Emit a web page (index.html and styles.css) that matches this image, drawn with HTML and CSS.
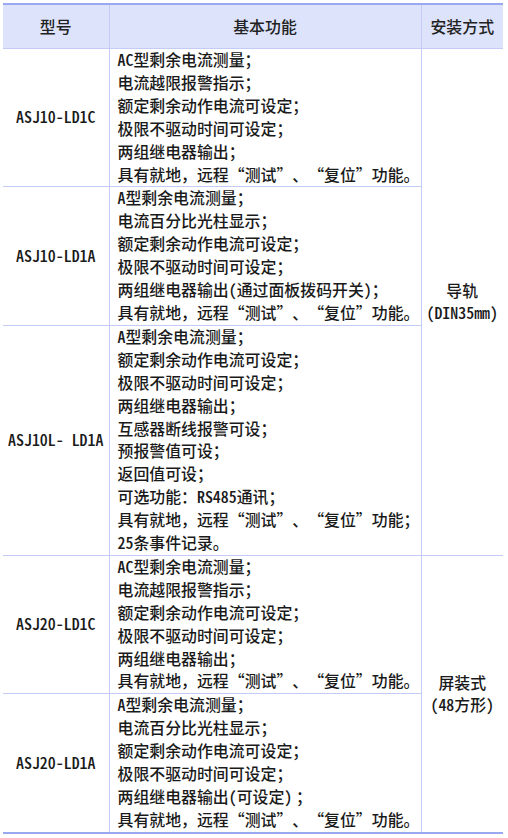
FILE: index.html
```html
<!DOCTYPE html>
<html lang="zh-CN">
<head>
<meta charset="utf-8">
<link rel="stylesheet" href="styles.css">
</head>
<body>
<div class="wrap">
<table class="spec">
  <colgroup>
    <col class="c1"><col class="c2"><col class="c3">
  </colgroup>
  <thead>
    <tr><th>型号</th><th>基本功能</th><th>安装方式</th></tr>
  </thead>
  <tbody>
    <tr>
      <td class="model">ASJ10-LD1C</td>
      <td class="func"><span class="en">AC</span>型剩余电流测量；<br>电流越限报警指示；<br>额定剩余动作电流可设定；<br>极限不驱动时间可设定；<br>两组继电器输出；<br>具有就地，远程<span class="qo">“</span>测试<span class="qc">”</span>、<span class="qo">“</span>复位<span class="qc">”</span>功能。</td>
      <td class="mount" rowspan="3">导轨<br><span class="en">(DIN35mm)</span></td>
    </tr>
    <tr>
      <td class="model">ASJ10-LD1A</td>
      <td class="func"><span class="en">A</span>型剩余电流测量；<br>电流百分比光柱显示；<br>额定剩余动作电流可设定；<br>极限不驱动时间可设定；<br>两组继电器输出<span class="en">(</span>通过面板拨码开关<span class="en">)</span>；<br>具有就地，远程<span class="qo">“</span>测试<span class="qc">”</span>、<span class="qo">“</span>复位<span class="qc">”</span>功能。</td>
    </tr>
    <tr>
      <td class="model">ASJ10L- LD1A</td>
      <td class="func"><span class="en">A</span>型剩余电流测量；<br>额定剩余动作电流可设定；<br>极限不驱动时间可设定；<br>两组继电器输出；<br>互感器断线报警可设；<br>预报警值可设；<br>返回值可设；<br>可选功能：<span class="en">RS485</span>通讯；<br>具有就地，远程<span class="qo">“</span>测试<span class="qc">”</span>、<span class="qo">“</span>复位<span class="qc">”</span>功能；<br><span class="en">25</span>条事件记录。</td>
    </tr>
    <tr>
      <td class="model">ASJ20-LD1C</td>
      <td class="func"><span class="en">AC</span>型剩余电流测量；<br>电流越限报警指示；<br>额定剩余动作电流可设定；<br>极限不驱动时间可设定；<br>两组继电器输出；<br>具有就地，远程<span class="qo">“</span>测试<span class="qc">”</span>、<span class="qo">“</span>复位<span class="qc">”</span>功能。</td>
      <td class="mount" rowspan="2">屏装式<br><span class="en">(48</span>方形<span class="en">)</span></td>
    </tr>
    <tr>
      <td class="model">ASJ20-LD1A</td>
      <td class="func"><span class="en">A</span>型剩余电流测量；<br>电流百分比光柱显示；<br>额定剩余动作电流可设定；<br>极限不驱动时间可设定；<br>两组继电器输出<span class="en">(</span>可设定<span class="en">)</span> ；<br>具有就地，远程<span class="qo">“</span>测试<span class="qc">”</span>、<span class="qo">“</span>复位<span class="qc">”</span>功能。</td>
    </tr>
  </tbody>
</table>
</div>
</body>
</html>
```

FILE: styles.css
```css
html, body {
  margin: 0;
  padding: 0;
  background: #ffffff;
}
.wrap {
  padding: 3px;
}
.spec {
  border-collapse: collapse;
  width: 500px;
  table-layout: fixed;
  font-family: "Noto Sans CJK SC", "Noto Sans", sans-serif;
  font-size: 15.9px;
  font-weight: 500;
  color: #1a1a1a;
  text-spacing-trim: space-all;
  border-top: 2px solid #9aa8f2;
  border-bottom: 2px solid #9aa8f2;
}
.spec .en {
  font-feature-settings: "hwid" 1;
}
.qo, .qc {
  display: inline-block;
  width: 1em;
}
.qo { text-align: right; }
.qc { text-align: left; }
.c1 { width: 106px; }
.c2 { width: 312px; }
.c3 { width: 82px; }
.spec th {
  background: #dde3fb;
  font-weight: 500;
  height: 43px;
  padding: 0;
  text-align: center;
  color: #222;
  border-left: 1px solid #c3cbf6;
  border-right: 1px solid #c3cbf6;
  border-bottom: 1px solid #c3cbf6;
}
.spec th:first-child { border-left: none; }
.spec th:last-child { border-right: none; }
.spec td {
  padding: 0 2px 0 8px;
  line-height: 22.9px;
  border: 1px solid #c3cbf6;
  vertical-align: middle;
}
.spec td:first-child { border-left: none; }
.spec td.mount { border-right: none; text-align: center; padding: 0 1px; line-height: 22px; }
.spec td.model { text-align: center; padding: 0 4px; font-feature-settings: "hwid" 1; }
.spec td.func { text-align: left; white-space: nowrap; }
```
